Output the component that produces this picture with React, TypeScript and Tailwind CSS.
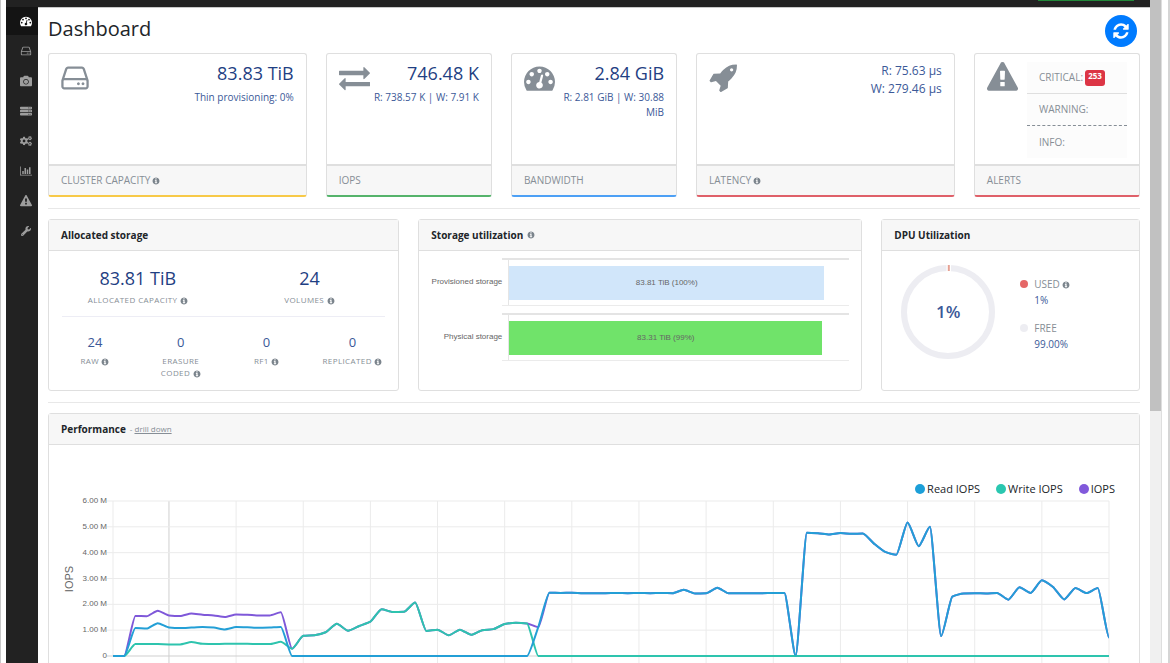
import React from 'react';
import { FaCamera, FaCogs, FaServer, FaWrench } from 'react-icons/fa';

interface IconProps {
  className?: string;
}

const ICONS = {
  gauge:
    'M384 1152q0-53-37.5-90.5t-90.5-37.5-90.5 37.5-37.5 90.5 37.5 90.5 90.5 37.5 90.5-37.5 37.5-90.5zm192-448q0-53-37.5-90.5t-90.5-37.5-90.5 37.5-37.5 90.5 37.5 90.5 90.5 37.5 90.5-37.5 37.5-90.5zm428 481l101-382q6-26-7.5-48.5t-38.5-29.5-48 6.5-30 39.5l-101 382q-60 5-107 43.5t-63 98.5q-20 77 20 146t117 89 146-20 89-117q16-60-6-117t-72-91zm660-33q0-53-37.5-90.5t-90.5-37.5-90.5 37.5-37.5 90.5 37.5 90.5 90.5 37.5 90.5-37.5 37.5-90.5zm-640-640q0-53-37.5-90.5t-90.5-37.5-90.5 37.5-37.5 90.5 37.5 90.5 90.5 37.5 90.5-37.5 37.5-90.5zm448 192q0-53-37.5-90.5t-90.5-37.5-90.5 37.5-37.5 90.5 37.5 90.5 90.5 37.5 90.5-37.5 37.5-90.5zm320 448q0 261-141 483-19 29-54 29h-1402q-35 0-54-29-141-221-141-483 0-182 71-348t191-286 286-191 348-71 348 71 286 191 191 286 71 348z',
  exchange:
    'M1792 1184v192q0 13-9.5 22.5t-22.5 9.5h-1376v192q0 13-9.5 22.5t-22.5 9.5q-12 0-24-10l-319-320q-9-9-9-22 0-14 9-23l320-320q9-9 23-9 13 0 22.5 9.5t9.5 22.5v192h1376q13 0 22.5 9.5t9.5 22.5zm0-544q0 14-9 23l-320 320q-9 9-23 9-13 0-22.5-9.5t-9.5-22.5v-192h-1376q-13 0-22.5-9.5t-9.5-22.5v-192q0-13 9.5-22.5t22.5-9.5h1376v-192q0-14 9-23t23-9q12 0 24 10l319 319q9 9 9 23z',
  refresh:
    'M1639 1056q0 5-1 7-64 268-268 434.5t-478 166.5q-146 0-282.5-55t-243.5-157l-129 129q-19 19-45 19t-45-19-19-45v-448q0-26 19-45t45-19h448q26 0 45 19t19 45-19 45l-137 137q71 66 161 102t187 36q134 0 250-65t186-179q11-17 53-117 8-23 30-23h192q13 0 22.5 9.5t9.5 22.5zm25-800v448q0 26-19 45t-45 19h-448q-26 0-45-19t-19-45 19-45l138-138q-148-137-349-137-134 0-250 65t-186 179q-11 17-53 117-8 23-30 23h-199q-13 0-22.5-9.5t-9.5-22.5v-7q65-268 270-434.5t480-166.5q146 0 284 55.5t245 156.5l130-129q19-19 45-19t45 19 19 45z',
  info:
    'M1152 1376v-160q0-14-9-23t-23-9h-96v-512q0-14-9-23t-23-9h-320q-14 0-23 9t-9 23v160q0 14 9 23t23 9h96v320h-96q-14 0-23 9t-9 23v160q0 14 9 23t23 9h448q14 0 23-9t9-23zm-128-896v-160q0-14-9-23t-23-9h-192q-14 0-23 9t-9 23v160q0 14 9 23t23 9h192q14 0 23-9t9-23zm640 416q0 209-103 385.5t-279.5 279.5-385.5 103-385.5-103-279.5-279.5-103-385.5 103-385.5 279.5-279.5 385.5-103 385.5 103 279.5 279.5 103 385.5z',
  disk:
    'M1168 1216q0 33-23.5 56.5t-56.5 23.5-56.5-23.5-23.5-56.5 23.5-56.5 56.5-23.5 56.5 23.5 23.5 56.5zm256 0q0 33-23.5 56.5t-56.5 23.5-56.5-23.5-23.5-56.5 23.5-56.5 56.5-23.5 56.5 23.5 23.5 56.5zm112 160v-320q0-13-9.5-22.5t-22.5-9.5h-1216q-13 0-22.5 9.5t-9.5 22.5v320q0 13 9.5 22.5t22.5 9.5h1216q13 0 22.5-9.5t9.5-22.5zm-1230-480h1180l-157-482q-4-13-16-21.5t-26-8.5h-782q-14 0-26 8.5t-16 21.5zm1358 160v320q0 66-47 113t-113 47h-1216q-66 0-113-47t-47-113v-320q0-25 16-75l197-606q17-53 63-86t101-33h782q55 0 101 33t63 86l197 606q16 50 16 75z',
  rocket:
    'M1440 448q0-40-28-68t-68-28-68 28-28 68 28 68 68 28 68-28 28-68zm224-288q0 249-75.5 430.5t-253.5 360.5q-81 80-195 176l-20 379q-2 16-16 26l-384 224q-7 4-16 4-12 0-23-9l-64-64q-13-14-8-32l85-276-281-281-276 85q-3 1-9 1-14 0-23-9l-64-64q-17-19-5-39l224-384q10-14 26-16l379-20q96-114 176-195 188-187 358-258t431-71q14 0 24 9.5t10 22.5z',
  warning:
    'M1024 1375v-190q0-14-9.5-23.5t-22.5-9.5h-192q-13 0-22.5 9.5t-9.5 23.5v190q0 14 9.5 23.5t22.5 9.5h192q13 0 22.5-9.5t9.5-23.5zm-2-374l18-459q0-12-10-19-13-11-24-11h-220q-11 0-24 11-10 7-10 21l17 457q0 10 10 16.5t24 6.5h185q14 0 23.5-6.5t10.5-16.5zm-14-934l768 1408q35 63-2 126-17 29-46.5 46t-63.5 17h-1536q-34 0-63.5-17t-46.5-46q-37-63-2-126l768-1408q17-31 47-49t65-18 65 18 47 49z',
};

const Icon: React.FC<{ name: keyof typeof ICONS; viewBox?: string; className?: string }> = ({
  name,
  viewBox = '0 0 1792 1792',
  className,
}) => (
  <svg viewBox={viewBox} fill="currentColor" aria-hidden="true" className={className}>
    <path d={ICONS[name]} />
  </svg>
);

const BarsIcon: React.FC<IconProps> = ({ className }) => (
  <svg viewBox="0 0 2048 1792" fill="currentColor" aria-hidden="true" className={className}>
    <path d="M640 896v512h-256v-512h256zm384-512v1024h-256v-1024h256zm1024 1152v128h-2048v-1536h128v1408h1920zm-640-896v768h-256v-768h256zm384-384v1152h-256v-1152h256z" />
  </svg>
);

const Info: React.FC = () => <Icon name="info" className="inline-block size-2 align-middle text-[#7b848c]" />;

const navItems = [
  { label: 'Dashboard', icon: <Icon name="gauge" className="size-3" /> },
  { label: 'Volumes', icon: <Icon name="disk" className="size-3" /> },
  { label: 'Snapshots', icon: <FaCamera className="size-3" /> },
  { label: 'Servers', icon: <FaServer className="h-2.5 w-3" preserveAspectRatio="none" /> },
  { label: 'Settings', icon: <FaCogs className="size-3" /> },
  { label: 'Analytics', icon: <BarsIcon className="size-3" /> },
  { label: 'Alerts', icon: <Icon name="warning" className="size-3" /> },
  { label: 'Maintenance', icon: <FaWrench className="size-2.5" /> },
];

const Sidebar: React.FC = () => (
  <nav className="w-8 shrink-0 bg-[#222]">
    <ul className="flex flex-col gap-0.5">
      {navItems.map((item, i) => (
        <li key={item.label}>
          <a
            href="#"
            aria-label={item.label}
            className={`flex h-7 items-center justify-center pl-2 ${i === 0 ? 'bg-[#141414] text-white' : 'text-[#9d9d9d]'}`}
          >
            {item.icon}
          </a>
        </li>
      ))}
    </ul>
  </nav>
);

interface StatCardProps {
  title: string;
  icon: React.ReactNode;
  span: string;
  accent: string;
  info?: boolean;
  children: React.ReactNode;
}

const StatCard: React.FC<StatCardProps> = ({ title, icon, span, accent, info, children }) => (
  <section className={`flex h-36 flex-col overflow-hidden rounded-[3px] border border-b-2 border-[#dfdfdf] bg-white ${span} ${accent}`}>
    <div className="flex min-h-0 flex-1 justify-between px-3 pt-2">
      <div className="shrink-0 text-[#868e96]">{icon}</div>
      {children}
    </div>
    <h2 className="flex h-[31px] items-center gap-0.5 border-t-2 border-[#dfdfdf] bg-[#f7f7f7] px-3 text-[10px] text-[#868e96]">
      {title} {info && <Info />}
    </h2>
  </section>
);

const Figure: React.FC<{ value: string; detail: string }> = ({ value, detail }) => (
  <div className="text-right text-[#3b5998]">
    <p className="text-lg leading-[22px] font-medium text-[#1f3f83]">{value}</p>
    <p className="mt-1.5 text-[10px] leading-[15px]">{detail}</p>
  </div>
);

const Panel: React.FC<{ title: React.ReactNode; span?: string; children: React.ReactNode }> = ({ title, span = '', children }) => (
  <section className={`flex flex-col rounded-[3px] border border-[#dfdfdf] bg-white ${span}`}>
    <h2 className="flex h-[31px] shrink-0 items-center gap-1 border-b border-[#dfdfdf] bg-[#f7f7f7] px-3 text-[10px] font-bold text-[#212529]">
      {title}
    </h2>
    {children}
  </section>
);

const volumeKinds = [
  { label: 'RAW', value: 24 },
  { label: 'ERASURE CODED', value: 0 },
  { label: 'RF1', value: 0 },
  { label: 'REPLICATED', value: 0 },
];

const AllocatedStorage: React.FC = () => (
  <Panel title="Allocated storage" span="col-span-4">
    <div className="px-[3px] text-center text-[8px] leading-3 tracking-wider text-[#868e96]">
      <div className="grid grid-cols-2 pt-[15px] pb-2.5">
        <div>
          <p className="text-lg leading-6 tracking-normal text-[#1f3f83]">83.81 TiB</p>
          <p className="mt-1">ALLOCATED CAPACITY <Info /></p>
        </div>
        <div>
          <p className="text-lg leading-6 tracking-normal text-[#1f3f83]">24</p>
          <p className="mt-1">VOLUMES <Info /></p>
        </div>
      </div>
      <hr className="mx-2.5 border-[#ededf5]" />
      <div className="grid grid-cols-4 pt-4">
        {volumeKinds.map((kind) => (
          <div key={kind.label}>
            <p className="text-[13px] leading-[18px] tracking-normal text-[#3b5998]">{kind.value}</p>
            <p className="mt-1 px-3 whitespace-nowrap">
              {kind.label === 'ERASURE CODED' ? (
                <>
                  ERASURE
                  <br />
                  CODED <Info />
                </>
              ) : (
                <>
                  {kind.label} <Info />
                </>
              )}
            </p>
          </div>
        ))}
      </div>
    </div>
  </Panel>
);

const usage = [
  { label: 'Provisioned storage', text: '83.81 TiB (100%)', percent: 100, color: 'bg-[#d1e6fa]' },
  { label: 'Physical storage', text: '83.31 TiB (99%)', percent: 99.4, color: 'bg-[#70e36a]' },
];

// the axis leaves some room past 100%
const AXIS_MAX = 108;

const StorageUtilization: React.FC = () => (
  <Panel title={<>Storage utilization <Info /></>} span="col-span-5">
    <div className="flex flex-col gap-[7px] px-3 pt-[7px] font-['Liberation_Sans',sans-serif] text-[8px] text-[#666]">
      {usage.map((row) => (
        <div key={row.label} className="flex h-12 items-center">
          <span className="w-[71px] shrink-0 text-right whitespace-nowrap">{row.label}</span>
          <div className="flex h-full flex-1 border-t-2 border-b border-t-[#e4e4e4] border-b-[#ebebeb] pl-1.5">
            <div className="flex flex-1 items-center border-l border-[#e5e5e5]">
              <div
                className={`flex h-[34px] items-center justify-center ${row.color}`}
                style={{ width: `${(row.percent / AXIS_MAX) * 100}%` }}
              >
                {row.text}
              </div>
            </div>
          </div>
        </div>
      ))}
    </div>
  </Panel>
);

const DpuUtilization: React.FC = () => (
  <Panel title="DPU Utilization" span="col-span-3">
    <div className="flex gap-6 px-[18px] pt-[13px]">
      <div className="relative size-24 shrink-0">
        <svg viewBox="0 0 96 96" className="size-full">
          <circle cx="48" cy="48" r="44" fill="none" stroke="#ededf2" strokeWidth="6" />
          <rect x="46.5" y="0" width="4.5" height="8" fill="#fff" />
          <rect x="47.8" y="1" width="2" height="6" fill="#e5a193" />
        </svg>
        <span className="absolute inset-0 flex items-center justify-center text-[17px] font-semibold text-[#3b5998]">1%</span>
      </div>
      <dl className="pt-3 text-[10px] leading-4">
        <dt className="flex items-center gap-1.5 text-[#868e96]">
          <span className="size-2 rounded-full bg-[#e56767]" />
          <span>USED <Info /></span>
        </dt>
        <dd className="pl-3.5 text-[#3b5998]">1%</dd>
        <dt className="mt-3 flex items-center gap-1.5 text-[#868e96]">
          <span className="size-2 rounded-full bg-[#ededf2]" />
          FREE
        </dt>
        <dd className="pl-3.5 text-[#3b5998]">99.00%</dd>
      </dl>
    </div>
  </Panel>
);

// values in millions, one sample per step
const flat = (value: number, count: number): number[] => Array(count).fill(value);

const readTail = [
  1.12, 2.45, 2.44, 2.45, 2.43, 2.43, 2.43, 2.44, 2.43, 2.44, 2.43, 2.44, 2.43, 2.56, 2.42, 2.43, 2.64, 2.43, 2.43, 2.43,
  2.43, 2.44, 2.44, 0, 4.77, 4.75, 4.7, 4.76, 4.73, 4.74, 4.35, 4.03, 3.92, 5.17, 4.25, 5.0, 0.77, 2.3, 2.42, 2.43, 2.42,
  2.44, 2.18, 2.66, 2.44, 2.93, 2.67, 2.19, 2.63, 2.44, 2.63, 0.72,
];
const writeMiddle = [
  0.28, 0.78, 0.8, 0.92, 1.25, 0.98, 1.16, 1.33, 1.81, 1.7, 1.71, 2.07, 0.97, 1.02, 0.8, 1.02, 0.82, 1.0, 1.04, 1.24, 1.29,
  1.26,
];

const read = [0, 0, 1.08, 1.06, 1.27, 1.1, 1.08, 1.1, 1.12, 1.1, 1.03, 1.12, 1.11, 1.09, 1.1, 1.12, ...flat(0, 22), ...readTail];
const write = [0, 0, 0.46, 0.46, 0.46, 0.45, 0.45, 0.54, 0.47, 0.46, 0.47, 0.47, 0.47, 0.46, 0.46, 0.55, ...writeMiddle, ...flat(0, 52)];
const total = [0, 0, 1.55, 1.54, 1.75, 1.57, 1.55, 1.65, 1.6, 1.57, 1.51, 1.61, 1.6, 1.57, 1.57, 1.69, ...writeMiddle, ...readTail];

const PLOT = { left: 64, right: 1060, top: 4, bottom: 159, max: 6 };
const STEP = (PLOT.right - PLOT.left) / 89;
const px = (i: number) => PLOT.left + i * STEP;
const py = (v: number) => PLOT.bottom - (v / PLOT.max) * (PLOT.bottom - PLOT.top);

const linePath = (data: number[]): string => {
  const slope = (i: number) => {
    if (i === 0 || i === data.length - 1) return 0;
    const before = py(data[i]) - py(data[i - 1]);
    const after = py(data[i + 1]) - py(data[i]);
    return before * after <= 0 ? 0 : (2 * before * after) / (before + after);
  };
  let d = `M${px(0)} ${py(data[0])}`;
  for (let i = 1; i < data.length; i++) {
    const k = 0.2;
    d += `C${px(i - 1 + k)} ${py(data[i - 1]) + slope(i - 1) * k} ${px(i - k)} ${py(data[i]) - slope(i) * k} ${px(i)} ${py(data[i])}`;
  }
  return d;
};

const columns = [0, ...Array.from({ length: 15 }, (_, i) => 5 + i * 6)];

const PerformanceChart: React.FC = () => (
  <svg viewBox="0 0 1090 180" className="block w-full">
    {columns.map((i) => (
      <line key={i} x1={px(i)} x2={px(i)} y1={PLOT.top} y2={PLOT.bottom + (i ? 7 : 0)} stroke={i === 5 ? '#cfcfcf' : '#ebebeb'} />
    ))}
    {[6, 5, 4, 3, 2, 1, 0].map((v) => (
      <g key={v}>
        <line x1={PLOT.left - 6} x2={PLOT.right} y1={py(v)} y2={py(v)} stroke={v ? '#ebebeb' : '#cfcfcf'} />
        <text x={PLOT.left - 6} y={py(v) + 2} textAnchor="end" fill="#666" className="font-['Liberation_Sans',sans-serif] text-[8px]">
          {v ? `${v}.00 M` : '0'}
        </text>
      </g>
    ))}
    <text transform="translate(24 82) rotate(-90)" textAnchor="middle" fill="#666" className="font-['Liberation_Sans',sans-serif] text-[11px]">
      IOPS
    </text>
    <g fill="none" strokeWidth="2" strokeLinejoin="round">
      <path d={linePath(total)} stroke="#7f58d9" />
      <path d={linePath(write)} stroke="#2ec4ae" />
      <path d={linePath(read)} stroke="#239fd6" />
      <path d={`M${px(38)} ${py(0)}H${px(89)}`} stroke="#2ec4ae" strokeWidth="1" />
    </g>
  </svg>
);

const legend = [
  { label: 'Read IOPS', color: 'bg-[#1c9fd8]' },
  { label: 'Write IOPS', color: 'bg-[#2ac7b0]' },
  { label: 'IOPS', color: 'bg-[#8159db]' },
];

const App: React.FC = () => {
  return (
    <div className="flex h-screen overflow-hidden border-r-2 border-l border-r-[#d5d5d5] border-l-[#c8c8c8] bg-white pr-1.5 pl-[5px] font-['Open_Sans','Noto_Sans',sans-serif] text-[#212529]">
      <div className="flex min-w-0 flex-1 flex-col">
        <header className="flex h-[7px] shrink-0 items-start justify-end bg-[#222] pr-4">
          <div className="h-px w-24 bg-[#218838]" />
        </header>
        <div className="flex min-h-0 flex-1">
          <Sidebar />
          <main className="min-w-0 flex-1 overflow-hidden border-t border-[#c8c8c8] px-2.5">
            <div className="flex h-[45px] items-center justify-between pr-[3px]">
              <h1 className="pb-1 text-xl leading-6 font-medium">Dashboard</h1>
              <button aria-label="Refresh" className="flex size-8 items-center justify-center rounded-full bg-[#007bff] text-white">
                <Icon name="refresh" className="size-[18px]" />
              </button>
            </div>

            <div className="grid grid-cols-12 gap-x-[19px]">
              <StatCard
                title="CLUSTER CAPACITY"
                info
                span="col-span-3"
                accent="border-b-[#f7c948]"
                icon={<Icon name="disk" viewBox="128 0 1536 1792" className="h-8 w-7" />}
              >
                <Figure value="83.83 TiB" detail="Thin provisioning: 0%" />
              </StatCard>
              <StatCard title="IOPS" span="col-span-2" accent="border-b-[#55b36b]" icon={<Icon name="exchange" className="size-[31px]" />}>
                <Figure value="746.48 K" detail="R: 738.57 K | W: 7.91 K" />
              </StatCard>
              <StatCard title="BANDWIDTH" span="col-span-2" accent="border-b-[#4da0f5]" icon={<Icon name="gauge" className="size-[31px]" />}>
                <Figure value="2.84 GiB" detail="R: 2.81 GiB | W: 30.88 MiB" />
              </StatCard>
              <StatCard
                title="LATENCY"
                info
                span="col-span-3"
                accent="border-b-[#df6069]"
                icon={<Icon name="rocket" viewBox="0 0 1664 1792" className="h-[31px] w-7" />}
              >
                <p className="text-right text-xs leading-[18px] text-[#3b5998]">
                  R: 75.63 µs
                  <br />
                  W: 279.46 µs
                </p>
              </StatCard>
              <StatCard title="ALERTS" span="col-span-2" accent="border-b-[#df6069]" icon={<Icon name="warning" className="size-[31px]" />}>
                <ul className="h-24 w-[100px] bg-[#fcfcfc] text-[10px] text-[#868e96]">
                  <li className="flex h-8 items-center gap-0.5 border-b border-[#dfdfdf] pl-3">
                    CRITICAL:
                    <span className="flex h-4 w-5 justify-center rounded-[3px] bg-[#dc3545] text-[8px] leading-3 font-bold text-white">253</span>
                  </li>
                  <li className="flex h-8 items-center border-b border-dashed border-[#868e96] pl-3">WARNING:</li>
                  <li className="flex h-8 items-center pl-3">INFO:</li>
                </ul>
              </StatCard>
            </div>

            <hr className="mt-[11px] mb-2.5 border-[#e8e8e8]" />

            <div className="grid min-h-[172px] grid-cols-12 gap-x-[19px]">
              <AllocatedStorage />
              <StorageUtilization />
              <DpuUtilization />
            </div>

            <hr className="mt-[11px] mb-2.5 border-[#e8e8e8]" />

            <Panel
              title={
                <>
                  Performance
                  <span className="text-[8px] font-normal text-[#868e96]">
                    - <a href="#" className="underline">drill down</a>
                  </span>
                </>
              }
            >
              <ul className="flex justify-end gap-4 pt-9 pr-6 text-[11px] leading-4">
                {legend.map((item) => (
                  <li key={item.label} className="flex items-center gap-0.5">
                    <span className={`size-2.5 rounded-full ${item.color}`} />
                    {item.label}
                  </li>
                ))}
              </ul>
              <PerformanceChart />
            </Panel>
          </main>
        </div>
      </div>
      <div className="w-3 shrink-0 border-r border-[#dedede] bg-[#f0f0f0]">
        <div className="h-[411px] bg-[#c1c1c1]" />
      </div>
    </div>
  );
};

export default App;
